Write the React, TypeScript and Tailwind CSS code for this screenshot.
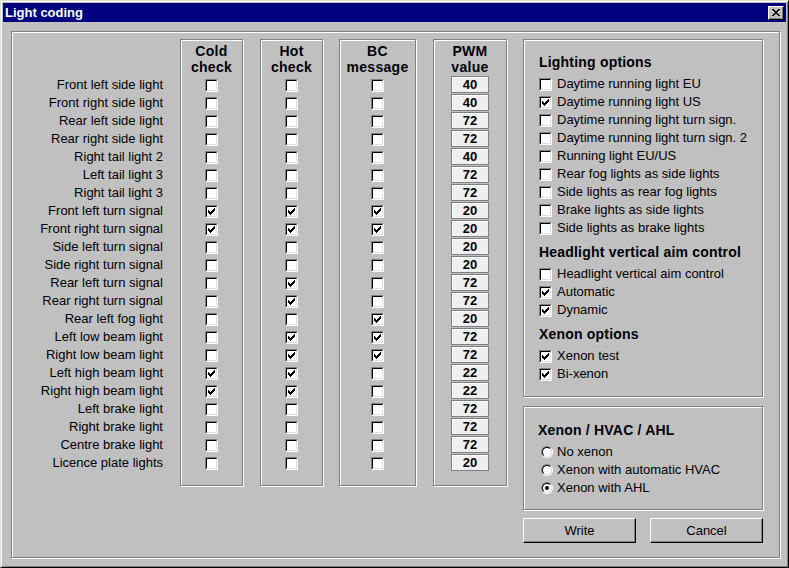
import React from 'react';

type Row = { label: string; cold: boolean; hot: boolean; bc: boolean; pwm: number };

const rows: Row[] = [
  { label: 'Front left side light', cold: false, hot: false, bc: false, pwm: 40 },
  { label: 'Front right side light', cold: false, hot: false, bc: false, pwm: 40 },
  { label: 'Rear left side light', cold: false, hot: false, bc: false, pwm: 72 },
  { label: 'Rear right side light', cold: false, hot: false, bc: false, pwm: 72 },
  { label: 'Right tail light 2', cold: false, hot: false, bc: false, pwm: 40 },
  { label: 'Left tail light 3', cold: false, hot: false, bc: false, pwm: 72 },
  { label: 'Right tail light 3', cold: false, hot: false, bc: false, pwm: 72 },
  { label: 'Front left turn signal', cold: true, hot: true, bc: true, pwm: 20 },
  { label: 'Front right turn signal', cold: true, hot: true, bc: true, pwm: 20 },
  { label: 'Side left turn signal', cold: false, hot: false, bc: false, pwm: 20 },
  { label: 'Side right turn signal', cold: false, hot: false, bc: false, pwm: 20 },
  { label: 'Rear left turn signal', cold: false, hot: true, bc: false, pwm: 72 },
  { label: 'Rear right turn signal', cold: false, hot: true, bc: false, pwm: 72 },
  { label: 'Rear left fog light', cold: false, hot: false, bc: true, pwm: 20 },
  { label: 'Left low beam light', cold: false, hot: true, bc: true, pwm: 72 },
  { label: 'Right low beam light', cold: false, hot: true, bc: true, pwm: 72 },
  { label: 'Left high beam light', cold: true, hot: true, bc: false, pwm: 22 },
  { label: 'Right high beam light', cold: true, hot: true, bc: false, pwm: 22 },
  { label: 'Left brake light', cold: false, hot: false, bc: false, pwm: 72 },
  { label: 'Right brake light', cold: false, hot: false, bc: false, pwm: 72 },
  { label: 'Centre brake light', cold: false, hot: false, bc: false, pwm: 72 },
  { label: 'Licence plate lights', cold: false, hot: false, bc: false, pwm: 20 },
];

const lightingOptions: [string, boolean][] = [
  ['Daytime running light EU', false],
  ['Daytime running light US', true],
  ['Daytime running light turn sign.', false],
  ['Daytime running light turn sign. 2', false],
  ['Running light EU/US', false],
  ['Rear fog lights as side lights', false],
  ['Side lights as rear fog lights', false],
  ['Brake lights as side lights', false],
  ['Side lights as brake lights', false],
];

const aimOptions: [string, boolean][] = [
  ['Headlight vertical aim control', false],
  ['Automatic', true],
  ['Dynamic', true],
];

const xenonOptions: [string, boolean][] = [
  ['Xenon test', true],
  ['Bi-xenon', true],
];

const radios: [string, boolean][] = [
  ['No xenon', false],
  ['Xenon with automatic HVAC', false],
  ['Xenon with AHL', true],
];

// classic 7x7 check glyph
const CHECK = [
  '......X',
  '.....XX',
  'X...XXX',
  'XX.XXX.',
  'XXXXX..',
  '.XXX...',
  '..X....',
];

const etched = 'border border-[#808080] shadow-[inset_1px_1px_0_#fff,1px_1px_0_#fff]';

function Check({ checked }: { checked: boolean }) {
  return (
    <div className="w-[13px] h-[13px] shrink-0 border border-t-[#808080] border-l-[#808080] border-r-white border-b-white">
      <div className="w-full h-full bg-white border border-t-black border-l-black border-r-[#dfdfdf] border-b-[#dfdfdf] flex items-center justify-center">
        {checked && (
          <svg width="7" height="7" viewBox="0 0 7 7" shapeRendering="crispEdges">
            {CHECK.map((line, y) =>
              line.split('').map((c, x) => (c === 'X' ? <rect key={`${x}-${y}`} x={x} y={y} width="1" height="1" fill="#000" /> : null))
            )}
          </svg>
        )}
      </div>
    </div>
  );
}

function Radio({ checked }: { checked: boolean }) {
  return (
    <div className="w-[12px] h-[12px] shrink-0 rounded-full border border-t-[#808080] border-l-[#808080] border-r-white border-b-white">
      <div className="w-full h-full rounded-full bg-white border border-t-black border-l-black border-r-[#dfdfdf] border-b-[#dfdfdf] flex items-center justify-center">
        {checked && <div className="w-[4px] h-[4px] rounded-full bg-black" />}
      </div>
    </div>
  );
}

function ColBox({ width, title, sub, children }: { width: string; title: string; sub: string; children: React.ReactNode }) {
  return (
    <div className={`${etched} ${width} h-[447px] mt-[7px] flex flex-col items-center pt-[3px]`}>
      <div className="text-[14px] font-bold leading-[16px] tracking-[0.3px] text-center mb-[1px] whitespace-nowrap">
        <div>{title}</div>
        <div>{sub}</div>
      </div>
      {children}
    </div>
  );
}

function OptionRow({ label, checked }: { label: string; checked: boolean }) {
  return (
    <div className="h-[18px] flex items-center gap-[5px] text-[13px] whitespace-nowrap">
      <Check checked={checked} />
      <span>{label}</span>
    </div>
  );
}

function Button({ label }: { label: string }) {
  return (
    <div className="w-[113px] h-[25px] border border-t-white border-l-white border-r-black border-b-black shadow-[inset_-1px_-1px_0_#808080] flex items-center justify-center text-[13px]">
      {label}
    </div>
  );
}

export default function App() {
  return (
    <div
      className="w-[789px] h-[568px] bg-[#c0c0c0] border border-t-[#dfdfdf] border-l-[#dfdfdf] border-r-black border-b-black shadow-[inset_1px_1px_0_#fff,inset_-1px_-1px_0_#808080] p-[2px] text-black overflow-hidden"
      style={{ fontFamily: '"Liberation Sans", Arial, sans-serif' }}
    >
      {/* Title bar */}
      <div className="h-[19px] bg-[#000080] flex items-center justify-between pl-[2px] pr-[2px]">
        <span className="text-white font-bold text-[13px] leading-none">Light coding</span>
        <div className="w-[16px] h-[14px] bg-[#c0c0c0] border border-t-white border-l-white border-r-black border-b-black shadow-[inset_-1px_-1px_0_#808080] flex items-center justify-center">
          <svg width="8" height="7" viewBox="0 0 8 7" shapeRendering="crispEdges">
            <path d="M0 0h2v1h1v1h2V1h1V0h2v1h-1v1h-1v1h-1v1h1v1h1v1h1v1h-2V6h-1V5H3v1H2v1H0V6h1V5h1V4h1V3H2V2H1V1H0z" fill="#000" />
          </svg>
        </div>
      </div>

      {/* Body */}
      <div className="pl-[8px] pt-[9px]">
        <div className={`${etched} w-[769px] h-[527px] flex items-start`}>
          {/* Row labels */}
          <div className="w-[151px] mt-[44px] flex flex-col items-end text-[13px]">
            {rows.map((r) => (
              <div key={r.label} className="h-[18px] leading-[18px] whitespace-nowrap">
                {r.label}
              </div>
            ))}
          </div>

          <div className="ml-[17px]">
            <ColBox width="w-[63px]" title="Cold" sub="check">
              {rows.map((r) => (
                <div key={r.label} className="h-[18px] flex items-center">
                  <Check checked={r.cold} />
                </div>
              ))}
            </ColBox>
          </div>

          <div className="ml-[17px]">
            <ColBox width="w-[63px]" title="Hot" sub="check">
              {rows.map((r) => (
                <div key={r.label} className="h-[18px] flex items-center">
                  <Check checked={r.hot} />
                </div>
              ))}
            </ColBox>
          </div>

          <div className="ml-[16px]">
            <ColBox width="w-[77px]" title="BC" sub="message">
              {rows.map((r) => (
                <div key={r.label} className="h-[18px] flex items-center">
                  <Check checked={r.bc} />
                </div>
              ))}
            </ColBox>
          </div>

          <div className="ml-[17px]">
            <ColBox width="w-[74px]" title="PWM" sub="value">
              {rows.map((r) => (
                <div key={r.label} className="h-[18px] flex items-start">
                  <div className="w-[38px] h-[17px] bg-[#efefef] border border-[#808080] shadow-[inset_1px_1px_0_#fff] flex items-center justify-center text-[13px] font-bold leading-none">
                    {r.pwm}
                  </div>
                </div>
              ))}
            </ColBox>
          </div>

          {/* Right panels */}
          <div className="ml-[16px] mt-[7px] w-[240px] flex flex-col">
            <div className={`${etched} h-[358px] pl-[15px] pt-[13px]`}>
              <div className="h-[18px] leading-[18px] text-[14px] font-bold tracking-[0.2px]">Lighting options</div>
              <div className="mt-[4px]">
                {lightingOptions.map(([l, c]) => (
                  <OptionRow key={l} label={l} checked={c} />
                ))}
              </div>
              <div className="mt-[6px] h-[18px] leading-[18px] text-[14px] font-bold tracking-[0.2px] whitespace-nowrap">Headlight vertical aim control</div>
              <div className="mt-[4px]">
                {aimOptions.map(([l, c]) => (
                  <OptionRow key={l} label={l} checked={c} />
                ))}
              </div>
              <div className="mt-[6px] h-[18px] leading-[18px] text-[14px] font-bold tracking-[0.2px]">Xenon options</div>
              <div className="mt-[4px]">
                {xenonOptions.map(([l, c]) => (
                  <OptionRow key={l} label={l} checked={c} />
                ))}
              </div>
            </div>

            <div className={`${etched} mt-[9px] h-[104px] pl-[14px] pt-[14px]`}>
              <div className="h-[18px] leading-[18px] text-[14px] font-bold tracking-[0.2px]">Xenon / HVAC / AHL</div>
              <div className="mt-[4px] pl-[3px]">
                {radios.map(([l, c]) => (
                  <div key={l} className="h-[18px] flex items-center gap-[4px] text-[13px] whitespace-nowrap">
                    <Radio checked={c} />
                    <span>{l}</span>
                  </div>
                ))}
              </div>
            </div>

            <div className="mt-[8px] flex justify-between">
              <Button label="Write" />
              <Button label="Cancel" />
            </div>
          </div>
        </div>
      </div>
    </div>
  );
}
